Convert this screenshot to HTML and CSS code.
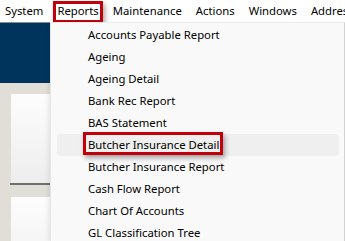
FILE: index.html
```html
<!DOCTYPE html>
<html lang="en">
<head>
    <meta charset="UTF-8">
    <title>Reports Menu</title>
    <link rel="stylesheet" href="styles.css">
</head>
<body>
    <div class="menubar">
        <span class="menu-item">System</span>
        <span class="menu-item active">Reports</span>
        <span class="menu-item">Maintenance</span>
        <span class="menu-item">Actions</span>
        <span class="menu-item">Windows</span>
        <span class="menu-item">Address</span>
    </div>

    <div class="main">
        <div class="sidebar">
            <div class="banner"></div>
            <div class="tiles">
                <div class="tile"></div>
                <div class="tile-rule"></div>
                <div class="tile"></div>
            </div>
        </div>

        <ul class="dropdown">
            <li>Accounts Payable Report</li>
            <li>Ageing</li>
            <li>Ageing Detail</li>
            <li>Bank Rec Report</li>
            <li>BAS Statement</li>
            <li class="hover"><span class="marked">Butcher Insurance Detail</span></li>
            <li>Butcher Insurance Report</li>
            <li>Cash Flow Report</li>
            <li>Chart Of Accounts</li>
            <li>GL Classification Tree</li>
        </ul>
    </div>
</body>
</html>
```

FILE: styles.css
```css
* {
    box-sizing: border-box;
}
html, body {
    margin: 0;
    height: 100%;
    overflow: hidden;
}
body {
    font-family: "Noto Sans", "Open Sans", sans-serif;
    font-size: 11.3px;
    color: #000;
    background-color: #fff;
}
.menubar {
    display: flex;
    height: 22px;
    padding-left: 5px;
    gap: 14px;
    background-color: #fff;
    white-space: nowrap;
    overflow: hidden;
}
.menu-item {
    position: relative;
    line-height: 22px;
}
.menu-item.active::after {
    content: "";
    position: absolute;
    top: 1px;
    bottom: -1px;
    left: -4px;
    right: -4px;
    border: 3px solid #c0000b;
    box-shadow: 2px 3px 5px rgba(0, 0, 0, 0.35);
}
.main {
    display: flex;
    height: 219px;
    overflow: hidden;
}
.sidebar {
    width: 50px;
    flex-shrink: 0;
    background-color: #e1ded7;
    border-top: 1px solid #8c8c8c;
}
.banner {
    height: 60px;
    background-color: #00345c;
}
.tiles {
    padding: 11px 0 0 11px;
}
.tile {
    height: 89px;
    background: linear-gradient(#fdfdfd, #ededed);
}
.tile-rule {
    height: 2px;
    margin: 0 0 12px -1px;
    background-color: #6e6e6e;
}
.dropdown {
    flex: 1;
    list-style: none;
    margin: 0;
    padding: 1px 5px 0 6px;
    background-color: #f9f9f9;
    border-left: 1px solid #e6e6e6;
    border-right: 1px solid #d2d2d2;
    border-top: 1px solid #ececec;
    box-shadow: -2px 0 4px rgba(0, 0, 0, 0.08);
    white-space: nowrap;
}
.dropdown li {
    height: 22px;
    line-height: 21px;
    padding-left: 31px;
    border-radius: 4px;
}
.dropdown li.hover {
    background-color: #efefef;
}
.marked {
    position: relative;
    display: inline-block;
}
.marked::after {
    content: "";
    position: absolute;
    top: -2px;
    bottom: 0;
    left: -5px;
    right: -4px;
    border: 3px solid #c0000b;
    box-shadow: 2px 3px 5px rgba(0, 0, 0, 0.35);
}
```
